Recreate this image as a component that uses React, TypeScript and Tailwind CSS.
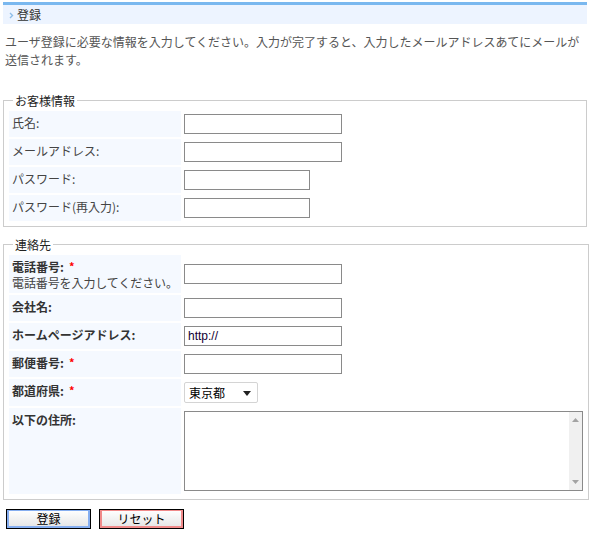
import React from "react";

const jp = '"Noto Sans CJK JP", "Noto Sans", sans-serif';

function Req() {
  return <span className="ml-[5px] text-[11px] font-bold text-[#ff0000] align-top leading-[14px]">*</span>;
}

function Row({ label, children, bold, req, sub }: { label: string; children: React.ReactNode; bold?: boolean; req?: boolean; sub?: string }) {
  return (
    <div className="flex gap-[3px]">
      <div className="w-[172px] shrink-0 whitespace-nowrap bg-[#f5f9ff] pl-[3px] pt-[4px] pb-[2px] leading-[16px]">
        <div className={bold ? "font-bold text-[#333]" : "text-[#444]"}>
          {label}
          {req && <Req />}
        </div>
        {sub && <div className="text-[#444] leading-[16px] tracking-[-0.1px]">{sub}</div>}
      </div>
      <div className="flex items-center py-[3px]">{children}</div>
    </div>
  );
}

function Input({ w, value }: { w: number; value?: string }) {
  return (
    <input
      type="text"
      defaultValue={value}
      style={{ width: w, fontFamily: '"Liberation Sans", Arial, sans-serif' }}
      className="h-[20px] border border-[#8a8a8a] bg-white px-[3px] text-[12px] text-[#110033] outline-none"
    />
  );
}

function Btn({ label, color }: { label: string; color: string }) {
  return (
    <button
      type="button"
      className="h-[20px] w-[85px] border border-black bg-gradient-to-b from-white to-[#e4e4e4] text-[12px] leading-[16px] text-black"
      style={{ boxShadow: `inset 2px 0 0 ${color}, inset -2px 0 0 ${color}, inset 0 -2px 0 ${color}, inset 0 1px 0 ${color}` }}
    >
      {label}
    </button>
  );
}

export default function App() {
  return (
    <div className="ml-[3px] w-[584px] pt-[2px] text-[12px] text-[#333]" style={{ fontFamily: jp }}>
      <div className="flex h-[22px] items-center border-t-[3px] border-[#7ab8ef] bg-[#edf4ff] pl-[6px]">
        <svg width="5" height="7" viewBox="0 0 5 7" className="mr-[3px] mt-[2px]">
          <path d="M1 1 L3.5 3.5 L1 6" stroke="#8dbde9" strokeWidth="1.4" fill="none" />
        </svg>
        <span className="text-[#333] leading-[16px]">登録</span>
      </div>

      <p className="mt-[9px] pl-[2px] leading-[18px] text-[#555]">
        ユーザ登録に必要な情報を入力してください。入力が完了すると、入力したメールアドレスあてにメールが送信されます。
      </p>

      <fieldset className="mt-[23px] border border-[#cccccc] px-[5px] pb-[5px]">
        <legend className="ml-[4px] px-[2px] leading-[17px] text-[#222]">お客様情報</legend>
        <div className="mt-[2px] flex flex-col gap-[2px]">
          <Row label="氏名:">
            <Input w={158} />
          </Row>
          <Row label="メールアドレス:">
            <Input w={158} />
          </Row>
          <Row label="パスワード:">
            <Input w={126} />
          </Row>
          <Row label="パスワード(再入力):">
            <Input w={126} />
          </Row>
        </div>
      </fieldset>

      <fieldset className="mt-[9px] border border-[#cccccc] px-[5px] pb-[5px]">
        <legend className="ml-[4px] px-[2px] leading-[17px] text-[#222]">連絡先</legend>
        <div className="mt-[2px] flex flex-col gap-[2px]">
          <Row label="電話番号:" bold req sub="電話番号を入力してください。">
            <Input w={158} />
          </Row>
          <Row label="会社名:" bold>
            <Input w={158} />
          </Row>
          <Row label="ホームページアドレス:" bold>
            <Input w={158} value="http://" />
          </Row>
          <Row label="郵便番号:" bold req>
            <Input w={158} />
          </Row>
          <Row label="都道府県:" bold req>
            <div className="relative">
              <select
                defaultValue="東京都"
                className="h-[21px] w-[74px] appearance-none rounded-[2px] border border-[#d4d4d4] bg-white pl-[4px] text-[12px] leading-[16px] text-black outline-none"
                style={{ fontFamily: jp }}
              >
                <option>東京都</option>
              </select>
              <svg width="8" height="5" viewBox="0 0 8 5" className="pointer-events-none absolute right-[7px] top-[9px]">
                <path d="M0 0 H8 L4 5 Z" fill="#222" />
              </svg>
            </div>
          </Row>
          <div className="flex gap-[3px]">
            <div className="w-[172px] shrink-0 bg-[#f5f9ff] pl-[3px] pt-[4px] font-bold leading-[16px] text-[#333]">以下の住所:</div>
            <div className="flex items-center py-[3px]">
              <div className="relative">
                <textarea className="block h-[80px] w-[399px] resize-none overflow-hidden border border-[#8a8a8a] bg-white pr-[16px] outline-none" />
                <div className="pointer-events-none absolute bottom-[1px] right-[1px] top-[1px] flex w-[13px] flex-col items-center justify-between bg-[#f0f0f0] py-[6px]">
                  <svg width="7" height="4" viewBox="0 0 7 4">
                    <path d="M0 4 L3.5 0 L7 4 Z" fill="#a3a3a3" />
                  </svg>
                  <svg width="7" height="4" viewBox="0 0 7 4">
                    <path d="M0 0 L7 0 L3.5 4 Z" fill="#a3a3a3" />
                  </svg>
                </div>
              </div>
            </div>
          </div>
        </div>
      </fieldset>

      <div className="mt-[9px] flex gap-[8px] pl-[3px]">
        <Btn label="登録" color="#86aef0" />
        <Btn label="リセット" color="#f08a8a" />
      </div>
    </div>
  );
}
